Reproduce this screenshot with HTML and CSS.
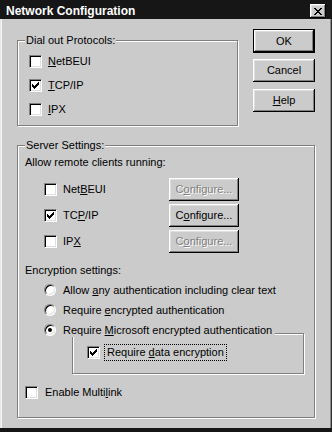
FILE: index.html
```html
<!DOCTYPE html>
<html>
<head>
<meta charset="utf-8">
<link rel="stylesheet" href="styles.css">
</head>
<body>
<div class="window">
  <div class="titlebar">
    <span class="title">Network Configuration</span>
    <span class="close"><svg width="8" height="7" viewBox="0 0 8 7" shape-rendering="crispEdges"><path d="M0 0h2v1H0zM6 0h2v1H6zM1 1h2v1H1zM5 1h2v1H5zM2 2h4v1H2zM3 3h2v1H3zM2 4h4v1H2zM1 5h2v1H1zM5 5h2v1H5zM0 6h2v1H0zM6 6h2v1H6z" fill="#000"/></svg></span>
  </div>
  <div class="body">
    <div class="top-row">
      <div class="group dial">
        <span class="group-title">Dial out Protocols:</span>
        <div class="check-row"><span class="check"></span><span><u>N</u>etBEUI</span></div>
        <div class="check-row"><span class="check"><svg width="7" height="7" viewBox="0 0 7 7" shape-rendering="crispEdges"><path d="M0 2h1v3H0zM1 3h1v3H1zM2 4h1v3H2zM3 3h1v3H3zM4 2h1v3H4zM5 1h1v3H5zM6 0h1v3H6z" fill="#000"/></svg></span><span><u>T</u>CP/IP</span></div>
        <div class="check-row"><span class="check"></span><span><u>I</u>PX</span></div>
      </div>
      <div class="buttons">
        <button class="btn default">OK</button>
        <button class="btn cancel">Cancel</button>
        <button class="btn help"><u>H</u>elp</button>
      </div>
    </div>
    <div class="group server">
      <span class="group-title">Server Settings:</span>
      <div class="line">Allow remote clients running:</div>
      <div class="protocols">
        <span class="check"></span><span>Net<u>B</u>EUI</span><button class="btn config disabled">C<u>o</u>nfigure...</button>
        <span class="check"><svg width="7" height="7" viewBox="0 0 7 7" shape-rendering="crispEdges"><path d="M0 2h1v3H0zM1 3h1v3H1zM2 4h1v3H2zM3 3h1v3H3zM4 2h1v3H4zM5 1h1v3H5zM6 0h1v3H6z" fill="#000"/></svg></span><span>TC<u>P</u>/IP</span><button class="btn config">C<u>o</u>nfigure...</button>
        <span class="check"></span><span>IP<u>X</u></span><button class="btn config disabled">C<u>o</u>nfigure...</button>
      </div>
      <div class="line enc">Encryption settings:</div>
      <div class="radios">
        <div class="radio-row"><span class="radio"></span><span>Allow <u>a</u>ny authentication including clear text</span></div>
        <div class="radio-row"><span class="radio"></span><span>Require <u>e</u>ncrypted authentication</span></div>
        <div class="radio-row over"><span class="radio on"></span><span class="cover">Require <u>M</u>icrosoft encrypted authentication</span></div>
      </div>
      <div class="group subgroup">
        <div class="sub-row"><span class="check"><svg width="7" height="7" viewBox="0 0 7 7" shape-rendering="crispEdges"><path d="M0 2h1v3H0zM1 3h1v3H1zM2 4h1v3H2zM3 3h1v3H3zM4 2h1v3H4zM5 1h1v3H5zM6 0h1v3H6z" fill="#000"/></svg></span><span class="focus">Require <u>d</u>ata encryption</span></div>
      </div>
      <div class="multi-row"><span class="check"></span><span>Enable Multi<u>l</u>ink</span></div>
    </div>
  </div>
</div>
</body>
</html>
```

FILE: styles.css
```css
* { box-sizing: border-box; }
body {
  margin: 0;
  font-family: "Liberation Sans", Arial, sans-serif;
  font-size: 11px;
  line-height: 13px;
  color: #000;
}
u { text-decoration: underline; text-underline-offset: 1px; }
.window {
  width: 332px;
  height: 432px;
  background: #cbcbcb;
  display: flex;
  flex-direction: column;
  box-shadow: inset 1px 0 #e8e8e8, inset 2px 0 #f4f4f4, inset -1px 0 #303030, inset -2px 0 #8a8a8a;
  border-bottom: 4px solid #161616;
}
.titlebar {
  height: 19px;
  flex: none;
  background: #161616;
  display: flex;
  align-items: center;
  justify-content: space-between;
  padding: 3px 6px 0 6px;
}
.title {
  color: #fff;
  font-weight: bold;
  font-size: 12px;
}
.close {
  width: 16px;
  height: 14px;
  background: #cbcbcb;
  box-shadow: inset -1px -1px #000, inset 1px 1px #fff, inset -2px -2px #808080, inset 2px 2px #dfdfdf;
  display: flex;
  align-items: center;
  justify-content: center;
}
.close svg, .check svg { display: block; }
.body { padding: 10px 0 0 17px; }
.top-row { display: flex; align-items: flex-start; }
.group {
  position: relative;
  border: 1px solid #808080;
  box-shadow: inset 1px 1px #fff, 1px 1px #fff;
}
.group-title {
  position: absolute;
  top: -7px;
  left: 7px;
  padding: 0 1px;
  background: #cbcbcb;
}
.dial {
  width: 221px;
  height: 86px;
  margin-top: 11px;
  padding: 8px 0 0 11px;
}
.check-row {
  display: flex;
  align-items: center;
  gap: 6px;
  height: 24px;
}
.check {
  width: 13px;
  height: 13px;
  flex: none;
  background: #fff;
  border: 1px solid;
  border-color: #808080 #fff #fff #808080;
  box-shadow: inset 1px 1px #000, inset -1px -1px #dfdfdf;
  padding: 2px;
}
.buttons {
  margin-left: 15px;
  display: flex;
  flex-direction: column;
}
.btn {
  width: 62px;
  height: 23px;
  background: #cbcbcb;
  border: 0;
  padding: 0;
  font: inherit;
  color: #000;
  box-shadow: inset -1px -1px #000, inset 1px 1px #fff, inset -2px -2px #808080, inset 2px 2px #dfdfdf;
  display: flex;
  align-items: center;
  justify-content: center;
}
.btn.default { height: 24px; border: 1px solid #000; }
.btn.cancel { margin-top: 6px; }
.btn.help { margin-top: 7px; }
.server {
  margin-top: 19px;
  width: 298px;
  height: 273px;
  padding: 10px 0 0 7px;
}
.protocols {
  margin-top: 7px;
  margin-left: 19px;
  display: grid;
  grid-template-columns: 13px 100px 70px;
  grid-auto-rows: 26px;
  column-gap: 6px;
  align-items: center;
}
.btn.config { width: 70px; height: 23px; }
.btn.disabled { color: #808080; text-shadow: 1px 1px #fff; }
.line.enc { margin-top: 10px; }
.radios { margin-top: 3px; margin-left: 19px; }
.radio-row {
  display: flex;
  align-items: center;
  gap: 7px;
  height: 20px;
}
.radio-row.over { position: relative; z-index: 1; }
.cover { background: #cbcbcb; padding-right: 3px; }
.radio {
  width: 12px;
  height: 12px;
  flex: none;
  border-radius: 50%;
  background: #fff;
  border: 1px solid;
  border-color: #808080 #fff #fff #808080;
  box-shadow: inset 1px 1px #000, inset -1px -1px #dfdfdf;
  display: flex;
  align-items: center;
  justify-content: center;
}
.radio.on::after {
  content: "";
  width: 4px;
  height: 4px;
  border-radius: 50%;
  background: #000;
}
.subgroup {
  margin-top: -7px;
  margin-left: 47px;
  width: 232px;
  height: 41px;
  padding: 10px 0 0 14px;
}
.sub-row {
  display: flex;
  align-items: center;
  gap: 4px;
  height: 17px;
}
.focus {
  border: 1px dotted #000;
  padding: 1px 2px;
}
.multi-row {
  margin-top: 12px;
  display: flex;
  align-items: center;
  gap: 7px;
  height: 13px;
}
```
